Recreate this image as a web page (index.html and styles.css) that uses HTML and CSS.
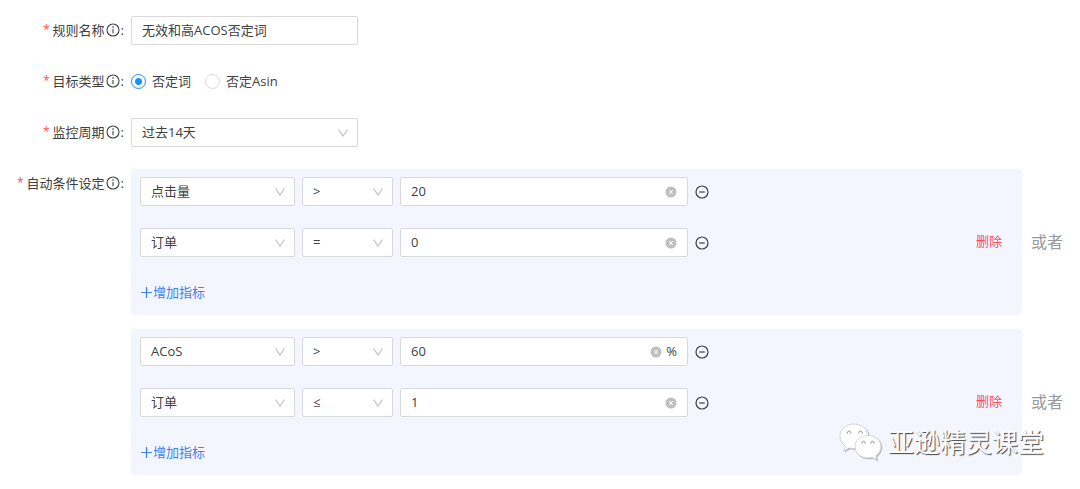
FILE: index.html
```html
<!DOCTYPE html>
<html lang="zh-CN">
<head>
    <meta charset="UTF-8">
    <meta name="viewport" content="width=device-width, initial-scale=1.0">
    <title>无效和高ACOS否定词</title>
    <link rel="stylesheet" href="styles.css">
</head>
<body>

<!-- shared icons -->
<svg class="sprite" aria-hidden="true">
    <symbol id="info" viewBox="0 0 14 14">
        <circle cx="7" cy="7" r="6" fill="none" stroke="currentColor" stroke-width="1.1"/>
        <path d="M7 6v4.2" stroke="currentColor" stroke-width="1.1"/>
        <circle cx="7" cy="4.1" r=".8" fill="currentColor"/>
    </symbol>
    <symbol id="down" viewBox="0 0 12 12">
        <path d="M1.5 2.5L6 9l4.500-6.500" fill="none" stroke="currentColor" stroke-width="1.1"/>
    </symbol>
    <symbol id="clear" viewBox="0 0 12 12">
        <circle cx="6" cy="6" r="5.500" fill="currentColor"/>
        <path d="M4.300 4l3.400 4M7.700 4l-3.400 4" stroke="#fff" stroke-width="1"/>
    </symbol>
    <symbol id="minus" viewBox="0 0 14 14">
        <circle cx="7" cy="7" r="6" fill="none" stroke="currentColor" stroke-width="1.200"/>
        <path d="M4.200 7h5.600" stroke="currentColor" stroke-width="1.200"/>
    </symbol>
    <symbol id="plus" viewBox="0 0 12 12">
        <path d="M6 1v10M1 6h10" stroke="currentColor" stroke-width="1.100"/>
    </symbol>
</svg>

<form class="rule-form">
    <div class="form-item">
        <label class="form-label" for="ruleName"><span class="required">*</span>规则名称<svg class="icon"><use href="#info"/></svg><span class="colon">:</span></label>
        <div class="field field-main">
            <input type="text" id="ruleName" value="无效和高ACOS否定词">
        </div>
    </div>

    <div class="form-item" role="radiogroup" aria-labelledby="typeLabel">
        <span class="form-label" id="typeLabel"><span class="required">*</span>目标类型<svg class="icon"><use href="#info"/></svg><span class="colon">:</span></span>
        <div class="radios">
            <label class="radio"><input type="radio" name="type" checked><span>否定词</span></label>
            <label class="radio"><input type="radio" name="type"><span>否定Asin</span></label>
        </div>
    </div>

    <div class="form-item">
        <label class="form-label" for="period"><span class="required">*</span>监控周期<svg class="icon"><use href="#info"/></svg><span class="colon">:</span></label>
        <div class="select field-main">
            <select id="period"><option>过去14天</option></select>
            <svg class="arrow"><use href="#down"/></svg>
        </div>
    </div>

    <div class="form-item" role="group" aria-labelledby="condLabel">
        <span class="form-label" id="condLabel"><span class="required">*</span>自动条件设定<svg class="icon"><use href="#info"/></svg><span class="colon">:</span></span>
        <div class="groups">
            <div class="group-line">
                <div class="group">
                    <div class="conditions">
                        <div class="condition">
                            <div class="select metric">
                                <select aria-label="指标"><option>点击量</option></select>
                                <svg class="arrow"><use href="#down"/></svg>
                            </div>
                            <div class="select operator">
                                <select aria-label="运算符"><option>&gt;</option></select>
                                <svg class="arrow"><use href="#down"/></svg>
                            </div>
                            <div class="field value">
                                <input type="text" aria-label="数值" value="20">
                                <button type="button" class="clear" aria-label="清空"><svg><use href="#clear"/></svg></button>
                            </div>
                            <button type="button" class="remove" aria-label="移除指标"><svg class="icon"><use href="#minus"/></svg></button>
                        </div>
                        <div class="condition">
                            <div class="select metric">
                                <select aria-label="指标"><option>订单</option></select>
                                <svg class="arrow"><use href="#down"/></svg>
                            </div>
                            <div class="select operator">
                                <select aria-label="运算符"><option>=</option></select>
                                <svg class="arrow"><use href="#down"/></svg>
                            </div>
                            <div class="field value">
                                <input type="text" aria-label="数值" value="0">
                                <button type="button" class="clear" aria-label="清空"><svg><use href="#clear"/></svg></button>
                            </div>
                            <button type="button" class="remove" aria-label="移除指标"><svg class="icon"><use href="#minus"/></svg></button>
                        </div>
                        <button type="button" class="add"><svg><use href="#plus"/></svg>增加指标</button>
                    </div>
                    <button type="button" class="delete">删除</button>
                </div>
                <span class="or">或者</span>
            </div>

            <div class="group-line">
                <div class="group">
                    <div class="conditions">
                        <div class="condition">
                            <div class="select metric">
                                <select aria-label="指标"><option>ACoS</option></select>
                                <svg class="arrow"><use href="#down"/></svg>
                            </div>
                            <div class="select operator">
                                <select aria-label="运算符"><option>&gt;</option></select>
                                <svg class="arrow"><use href="#down"/></svg>
                            </div>
                            <div class="field value">
                                <input type="text" aria-label="数值" value="60">
                                <button type="button" class="clear" aria-label="清空"><svg><use href="#clear"/></svg></button>
                                <span class="suffix">%</span>
                            </div>
                            <button type="button" class="remove" aria-label="移除指标"><svg class="icon"><use href="#minus"/></svg></button>
                        </div>
                        <div class="condition">
                            <div class="select metric">
                                <select aria-label="指标"><option>订单</option></select>
                                <svg class="arrow"><use href="#down"/></svg>
                            </div>
                            <div class="select operator">
                                <select aria-label="运算符"><option>≤</option></select>
                                <svg class="arrow"><use href="#down"/></svg>
                            </div>
                            <div class="field value">
                                <input type="text" aria-label="数值" value="1">
                                <button type="button" class="clear" aria-label="清空"><svg><use href="#clear"/></svg></button>
                            </div>
                            <button type="button" class="remove" aria-label="移除指标"><svg class="icon"><use href="#minus"/></svg></button>
                        </div>
                        <button type="button" class="add"><svg><use href="#plus"/></svg>增加指标</button>
                    </div>
                    <button type="button" class="delete">删除</button>
                </div>
                <span class="or">或者</span>
            </div>
        </div>
    </div>

    <div class="watermark">
        <svg class="wechat" viewBox="0 0 44 38" aria-hidden="true">
            <g fill="#fff" stroke="#bbb" stroke-width=".6">
                <path d="M15 1C7 1 1 6.500 1 13.500c0 4 2 7.300 5.300 9.500L5 28l5.500-3c1.500.5 3 .7 4.500.7 8 0 14.500-5.500 14.500-12.300C29.500 6.500 23 1 15 1z"/>
                <path d="M29 12.500c-7.500 0-13 5-13 11.200S21.500 35 29 35c1.500 0 3-.2 4.300-.6L38 37l-1.200-4.200c3.200-2 5.200-5.300 5.200-9.100 0-6.200-5.500-11.200-13-11.200z"/>
            </g>
            <g fill="none" stroke="#888" stroke-width="1">
                <path d="M8.300 10.500a1.800 1.800 0 1 1 3.400 0M19.800 10.500a1.800 1.800 0 1 1 3.400 0"/>
                <path d="M23 20.500a1.600 1.600 0 1 1 3 0M32 20.500a1.600 1.600 0 1 1 3 0"/>
            </g>
        </svg>
        <span>亚逊精灵课堂</span>
    </div>
</form>

</body>
</html>
```

FILE: styles.css
```css
* {
    box-sizing: border-box;
}
body {
    margin: 0;
    background-color: #fff;
    color: #404040;
    font-family: "Open Sans", "Noto Sans CJK SC", sans-serif;
    font-size: 13px;
    line-height: 20px;
}
input, select, button {
    margin: 0;
    padding: 0;
    border: 0;
    background: none;
    color: inherit;
    font: inherit;
}
button {
    cursor: pointer;
}
svg {
    display: block;
    flex: none;
}
.sprite {
    display: none;
}
.icon {
    width: 14px;
    height: 14px;
}
.rule-form {
    position: relative;
    display: flex;
    flex-direction: column;
    gap: 22px;
    padding: 16px 16px 14px 0;
}
.form-item {
    display: flex;
    align-items: flex-start;
    gap: 7px;
}
.form-label {
    display: flex;
    align-items: center;
    justify-content: flex-end;
    width: 124px;
    height: 28px;
    padding-bottom: 1px;
    flex: none;
}
.form-label .icon {
    margin-left: 1px;
}
.required {
    margin-right: 3px;
    color: #ff4d4f;
    font-size: 12px;
}
.colon {
    margin-left: 1px;
}
.field, .select {
    display: flex;
    align-items: center;
    height: 29px;
    border: 1px solid #d9d9d9;
    border-radius: 2px;
    background-color: #fff;
}
.field {
    gap: 4px;
    padding: 0 10px;
}
.field input {
    flex: 1;
    min-width: 0;
    height: 100%;
    padding-bottom: 2px;
    outline: none;
}
.field-main {
    width: 227px;
}
.select {
    display: grid;
}
.select select {
    grid-area: 1 / 1;
    width: 100%;
    height: 27px;
    padding: 0 28px 2px 10px;
    appearance: none;
    outline: none;
}
.arrow {
    grid-area: 1 / 1;
    justify-self: end;
    width: 12px;
    height: 12px;
    margin-right: 8px;
    color: #bfbfbf;
    pointer-events: none;
}
.radios {
    display: flex;
    align-items: center;
    gap: 14px;
    height: 29px;
}
.radio {
    display: flex;
    align-items: center;
    gap: 6px;
}
.radio span {
    padding-bottom: 2px;
}
.radio input {
    width: 15px;
    height: 15px;
    border: 1px solid #d9d9d9;
    border-radius: 50%;
    background-color: #fff;
    appearance: none;
}
.radio input:checked {
    border-color: #1890ff;
    background: radial-gradient(circle, #1890ff 3px, #fff 4px);
}
.groups {
    display: flex;
    flex: 1;
    flex-direction: column;
    gap: 14px;
}
.group-line {
    display: flex;
    align-items: center;
    gap: 9px;
}
.group {
    display: flex;
    flex: 1;
    align-items: center;
    justify-content: space-between;
    padding: 8px 20px 8px 9px;
    border-radius: 4px;
    background-color: #f3f6fe;
}
.conditions {
    display: flex;
    flex-direction: column;
    align-items: flex-start;
    gap: 22px;
}
.condition {
    display: flex;
    align-items: center;
    gap: 7px;
}
.metric {
    width: 155px;
}
.operator {
    width: 91px;
}
.value {
    width: 288px;
}
.clear {
    color: #bfbfbf;
}
.clear svg {
    width: 12px;
    height: 12px;
}
.suffix {
    padding-bottom: 2px;
}
.add {
    display: flex;
    align-items: center;
    height: 28px;
    padding-bottom: 2px;
    color: #3d7fff;
}
.add svg {
    width: 13px;
    height: 13px;
}
.delete {
    padding-bottom: 2px;
    color: #ff4d5f;
}
.or {
    padding-right: 1px;
    color: #999;
    font-size: 16px;
    line-height: 24px;
}
.watermark {
    position: absolute;
    right: 36px;
    bottom: 27px;
    display: flex;
    align-items: center;
    gap: 5px;
    color: #fff;
    font-size: 26px;
    line-height: 40px;
    text-shadow: 1px 1px 1px #444;
    pointer-events: none;
}
.wechat {
    width: 44px;
    height: 38px;
    filter: drop-shadow(1px 1px 0 #bbb);
}
```
